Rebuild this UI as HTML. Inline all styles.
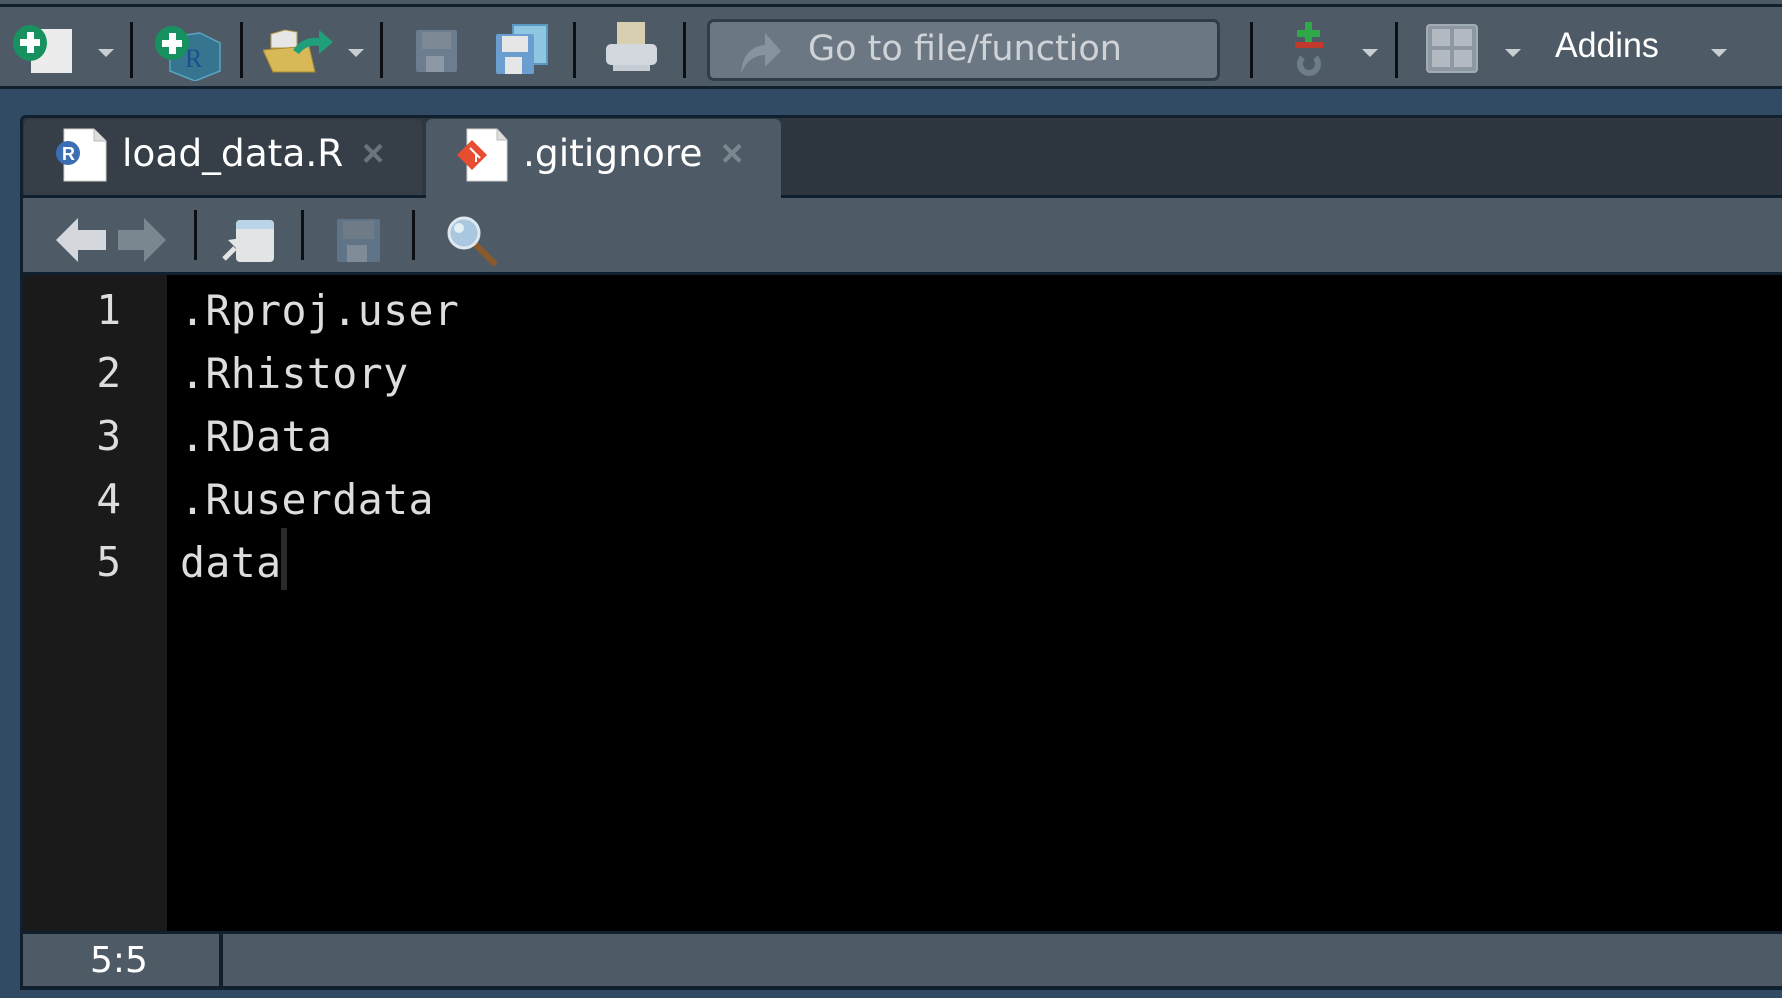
<!DOCTYPE html>
<html><head><meta charset="utf-8"><style>
*{margin:0;padding:0;box-sizing:border-box}
body{width:1782px;height:998px;overflow:hidden;background:#304b63;position:relative;font-family:"Liberation Sans",sans-serif}
.abs{position:absolute}
.dv{font-family:"DejaVu Sans",sans-serif}
.sep{position:absolute;width:3px;background:#0b0f14}
.tri{position:absolute;width:0;height:0;border-left:8px solid transparent;border-right:8px solid transparent;border-top:8px solid #c9ced3}
</style></head><body>
<div class="abs" style="left:0;top:0;width:1782px;height:4px;background:#4d5a66"></div>
<div class="abs" style="left:0;top:4px;width:1782px;height:3px;background:#10202e"></div>
<div class="abs" style="left:0;top:7px;width:1782px;height:79px;background:#4e5b67"></div>
<div class="abs" style="left:0;top:86px;width:1782px;height:3px;background:#10202e"></div>

<div class="abs" style="left:31px;top:29px;width:41px;height:44px;background:#ececec"></div>
<div class="abs" style="left:13px;top:25px;width:34px;height:36px;border-radius:50%;background:#16915f"></div>
<div class="abs" style="left:20px;top:39px;width:20px;height:7px;background:#fff"></div>
<div class="abs" style="left:27px;top:32px;width:7px;height:21px;background:#fff"></div>
<div class="tri" style="left:98px;top:49px"></div>
<div class="sep" style="left:130px;top:22px;height:56px"></div>
<svg class="abs" style="left:155px;top:25px" width="68" height="56" viewBox="0 0 68 56"><path d="M15 12 L45 8 L65 18 L65 46 L40 56 L15 46Z" fill="#2c7fa0" opacity=".7" stroke="#5fc6e6" stroke-width="1.5"/><text x="30" y="42" font-family="Liberation Serif" font-size="26" fill="#1d4f8f">R</text><circle cx="17" cy="18" r="17" fill="#16915f"/><rect x="7" y="15" width="20" height="7" fill="#fff"/><rect x="14" y="8" width="7" height="21" fill="#fff"/></svg>
<div class="sep" style="left:240px;top:22px;height:56px"></div>
<svg class="abs" style="left:263px;top:28px" width="72" height="46" viewBox="0 0 72 46"><path d="M8 6 L22 2 L34 4 L34 20 L8 20Z" fill="#e6e6e6" stroke="#b59a4a"/><path d="M0 22 L46 18 L52 44 L10 44Z" fill="#d9b858" stroke="#a88b2f"/><path d="M30 22 Q40 8 56 10 L56 2 L70 14 L56 26 L56 18 Q44 16 36 26Z" fill="#1fa07a"/></svg>
<div class="tri" style="left:348px;top:49px"></div>
<div class="sep" style="left:380px;top:22px;height:56px"></div>
<div class="abs" style="left:416px;top:30px;width:41px;height:42px;background:#6b7d8e;border-radius:2px"></div>
<div class="abs" style="left:422px;top:32px;width:29px;height:17px;background:#7d8a95"></div>
<div class="abs" style="left:426px;top:56px;width:18px;height:16px;background:#8c98a3"></div>
<div class="abs" style="left:512px;top:24px;width:36px;height:41px;background:#8fc6e2;border:2px solid #5a9ac2"></div>
<div class="abs" style="left:496px;top:34px;width:38px;height:40px;background:#6a9ed1;border-radius:2px"></div>
<div class="abs" style="left:502px;top:36px;width:26px;height:16px;background:#e6e6e6"></div>
<div class="abs" style="left:505px;top:57px;width:17px;height:17px;background:#e6e6e6"></div>
<div class="sep" style="left:573px;top:22px;height:56px"></div>
<div class="abs" style="left:617px;top:22px;width:28px;height:26px;background:#d8cfb0"></div>
<div class="abs" style="left:606px;top:44px;width:51px;height:21px;background:#d3d8de;border-radius:5px"></div>
<div class="abs" style="left:613px;top:65px;width:37px;height:6px;background:#c5ccd3"></div>
<div class="sep" style="left:683px;top:22px;height:56px"></div>
<div class="abs" style="left:707px;top:19px;width:513px;height:62px;background:#6b7883;border:3px solid #2f3d4a;border-radius:7px"></div>
<svg class="abs" style="left:735px;top:27px" width="48" height="48" viewBox="0 0 48 48"><path d="M6 46 Q8 20 30 18 L30 6 L46 24 L30 40 L30 28 Q14 28 6 46Z" fill="#8794a0"/></svg>
<div class="abs dv" style="left:808px;top:29px;font-size:35px;color:#cfd3d7;white-space:nowrap">Go to file/function</div>
<div class="sep" style="left:1250px;top:22px;height:56px"></div>
<div class="abs" style="left:1305px;top:22px;width:7px;height:23px;background:#2fa84a"></div>
<div class="abs" style="left:1297px;top:30px;width:23px;height:7px;background:#2fa84a"></div>
<div class="abs" style="left:1295px;top:42px;width:28px;height:6px;background:#c0392b"></div>
<div class="abs" style="left:1297px;top:52px;width:24px;height:24px;border:6px solid #6e7d8a;border-radius:50%;border-top-color:transparent"></div>
<div class="tri" style="left:1362px;top:49px"></div>
<div class="sep" style="left:1395px;top:22px;height:56px"></div>
<div class="abs" style="left:1426px;top:24px;width:52px;height:49px;background:#8d98a2;border-radius:4px;border:2px solid #a2acb5"></div>
<div class="abs" style="left:1432px;top:29px;width:18px;height:17px;background:#b3bac1"></div>
<div class="abs" style="left:1454px;top:29px;width:18px;height:17px;background:#b3bac1"></div>
<div class="abs" style="left:1432px;top:50px;width:18px;height:17px;background:#b3bac1"></div>
<div class="abs" style="left:1454px;top:50px;width:18px;height:17px;background:#b3bac1"></div>
<div class="tri" style="left:1505px;top:49px"></div>
<div class="abs" style="left:1555px;top:26px;font-size:35px;color:#fff;transform:scaleX(.97);transform-origin:left">Addins</div>
<div class="tri" style="left:1711px;top:49px"></div>

<div class="abs" style="left:20px;top:115px;width:1762px;height:84px;background:#2e3740;border-top:3px solid #10202e;border-left:3px solid #10202e;border-radius:6px 0 0 0"></div>
<div class="abs" style="left:24px;top:119px;width:398px;height:77px;background:#363f48;border-radius:6px 6px 0 0"></div>
<div class="abs" style="left:426px;top:119px;width:355px;height:82px;background:#4e5b67;border-radius:6px 6px 0 0"></div>
<div class="abs" style="left:20px;top:195px;width:406px;height:3px;background:#10202e"></div>
<div class="abs" style="left:781px;top:195px;width:1001px;height:3px;background:#10202e"></div>
<svg class="abs" style="left:56px;top:128px" width="52" height="54" viewBox="0 0 52 54"><path d="M8 1 L38 1 L50 13 L50 53 L8 53Z" fill="#fff" stroke="#cfcfcf"/><path d="M38 1 L38 13 L50 13" fill="#ddd" stroke="#bbb"/><circle cx="12" cy="25" r="12" fill="#3c6eb4"/><text x="6" y="32" font-size="18" font-weight="bold" fill="#fff" font-family="Liberation Sans">R</text></svg>
<div class="abs dv" style="left:122px;top:131px;font-size:37.5px;color:#fff">load_data.R</div>
<div class="abs" style="left:362px;top:133px;font-size:38px;color:#6b747c;font-weight:bold">×</div>
<svg class="abs" style="left:455px;top:128px" width="54" height="54" viewBox="0 0 54 54"><path d="M12 1 L42 1 L52 12 L52 53 L12 53Z" fill="#fff" stroke="#cfcfcf"/><path d="M42 1 L42 12 L52 12" fill="#ddd" stroke="#bbb"/><path d="M17 12 L32 27 L17 42 L2 27Z" fill="#e84d31"/><path d="M15 20 L21 26 L21 34 M21 26 L25 30" stroke="#fff" stroke-width="2" fill="none"/></svg>
<div class="abs dv" style="left:523px;top:131px;font-size:37.5px;color:#fff">.gitignore</div>
<div class="abs" style="left:721px;top:133px;font-size:38px;color:#7c868f;font-weight:bold">×</div>

<div class="abs" style="left:20px;top:198px;width:3px;height:792px;background:#10202e"></div>
<div class="abs" style="left:23px;top:198px;width:1759px;height:74px;background:#4e5b67"></div>
<div class="abs" style="left:23px;top:272px;width:1759px;height:3px;background:#10202e"></div>
<svg class="abs" style="left:56px;top:216px" width="112" height="48" viewBox="0 0 112 48"><path d="M0 24 L22 2 L22 14 L50 14 L50 34 L22 34 L22 46Z" fill="#d4d8dc"/><path d="M110 24 L88 2 L88 14 L62 14 L62 34 L88 34 L88 46Z" fill="#7a8690"/></svg>
<div class="sep" style="left:194px;top:210px;height:50px"></div>
<div class="abs" style="left:236px;top:220px;width:38px;height:42px;background:#e2e4e6;border-radius:4px"></div>
<div class="abs" style="left:236px;top:220px;width:38px;height:9px;background:#b8d4e6;border-radius:4px 4px 0 0"></div>
<svg class="abs" style="left:220px;top:232px" width="26" height="30" viewBox="0 0 26 30"><path d="M4 27 L15 16" stroke="#e2e4e6" stroke-width="5"/><path d="M8 8 L22 6 L20 20Z" fill="#e2e4e6"/></svg>
<div class="sep" style="left:301px;top:210px;height:50px"></div>
<div class="abs" style="left:337px;top:219px;width:43px;height:43px;background:#5f7587;border-radius:2px"></div>
<div class="abs" style="left:343px;top:221px;width:31px;height:18px;background:#6f7c88"></div>
<div class="abs" style="left:347px;top:245px;width:20px;height:17px;background:#7f8b96"></div>
<div class="sep" style="left:412px;top:210px;height:50px"></div>
<svg class="abs" style="left:446px;top:215px" width="52" height="52" viewBox="0 0 52 52"><line x1="28" y1="28" x2="48" y2="48" stroke="#8b5a2b" stroke-width="6" stroke-linecap="round"/><circle cx="18" cy="18" r="15" fill="#a9c8e0" stroke="#dfe8ef" stroke-width="3"/><circle cx="13" cy="13" r="5" fill="#fff" opacity=".7"/></svg>

<div class="abs" style="left:23px;top:275px;width:144px;height:656px;background:#1a1a1a"></div>
<div class="abs" style="left:167px;top:275px;width:1615px;height:656px;background:#000"></div>
<div class="abs" style="left:23px;top:279px;width:144px;font-family:'DejaVu Sans Mono',monospace;font-size:41px;line-height:63px;color:#ddd;text-align:right;padding-right:46px">1<br>2<br>3<br>4<br>5</div>
<div class="abs" style="left:180px;top:279px;font-family:'DejaVu Sans Mono',monospace;font-size:41.5px;letter-spacing:.4px;line-height:63px;color:#ddd;white-space:pre">.Rproj.user
.Rhistory
.RData
.Ruserdata
data</div>
<div class="abs" style="left:281px;top:528px;width:6px;height:62px;background:#2a2a2a"></div>

<div class="abs" style="left:23px;top:931px;width:1759px;height:3px;background:#10202e"></div>
<div class="abs" style="left:23px;top:934px;width:1759px;height:52px;background:#4e5b67"></div>
<div class="abs" style="left:219px;top:934px;width:4px;height:52px;background:#10202e"></div>
<div class="abs dv" style="left:90px;top:940px;font-size:36px;color:#fff">5:5</div>
<div class="abs" style="left:20px;top:986px;width:1762px;height:4px;background:#10202e"></div>
</body></html>
